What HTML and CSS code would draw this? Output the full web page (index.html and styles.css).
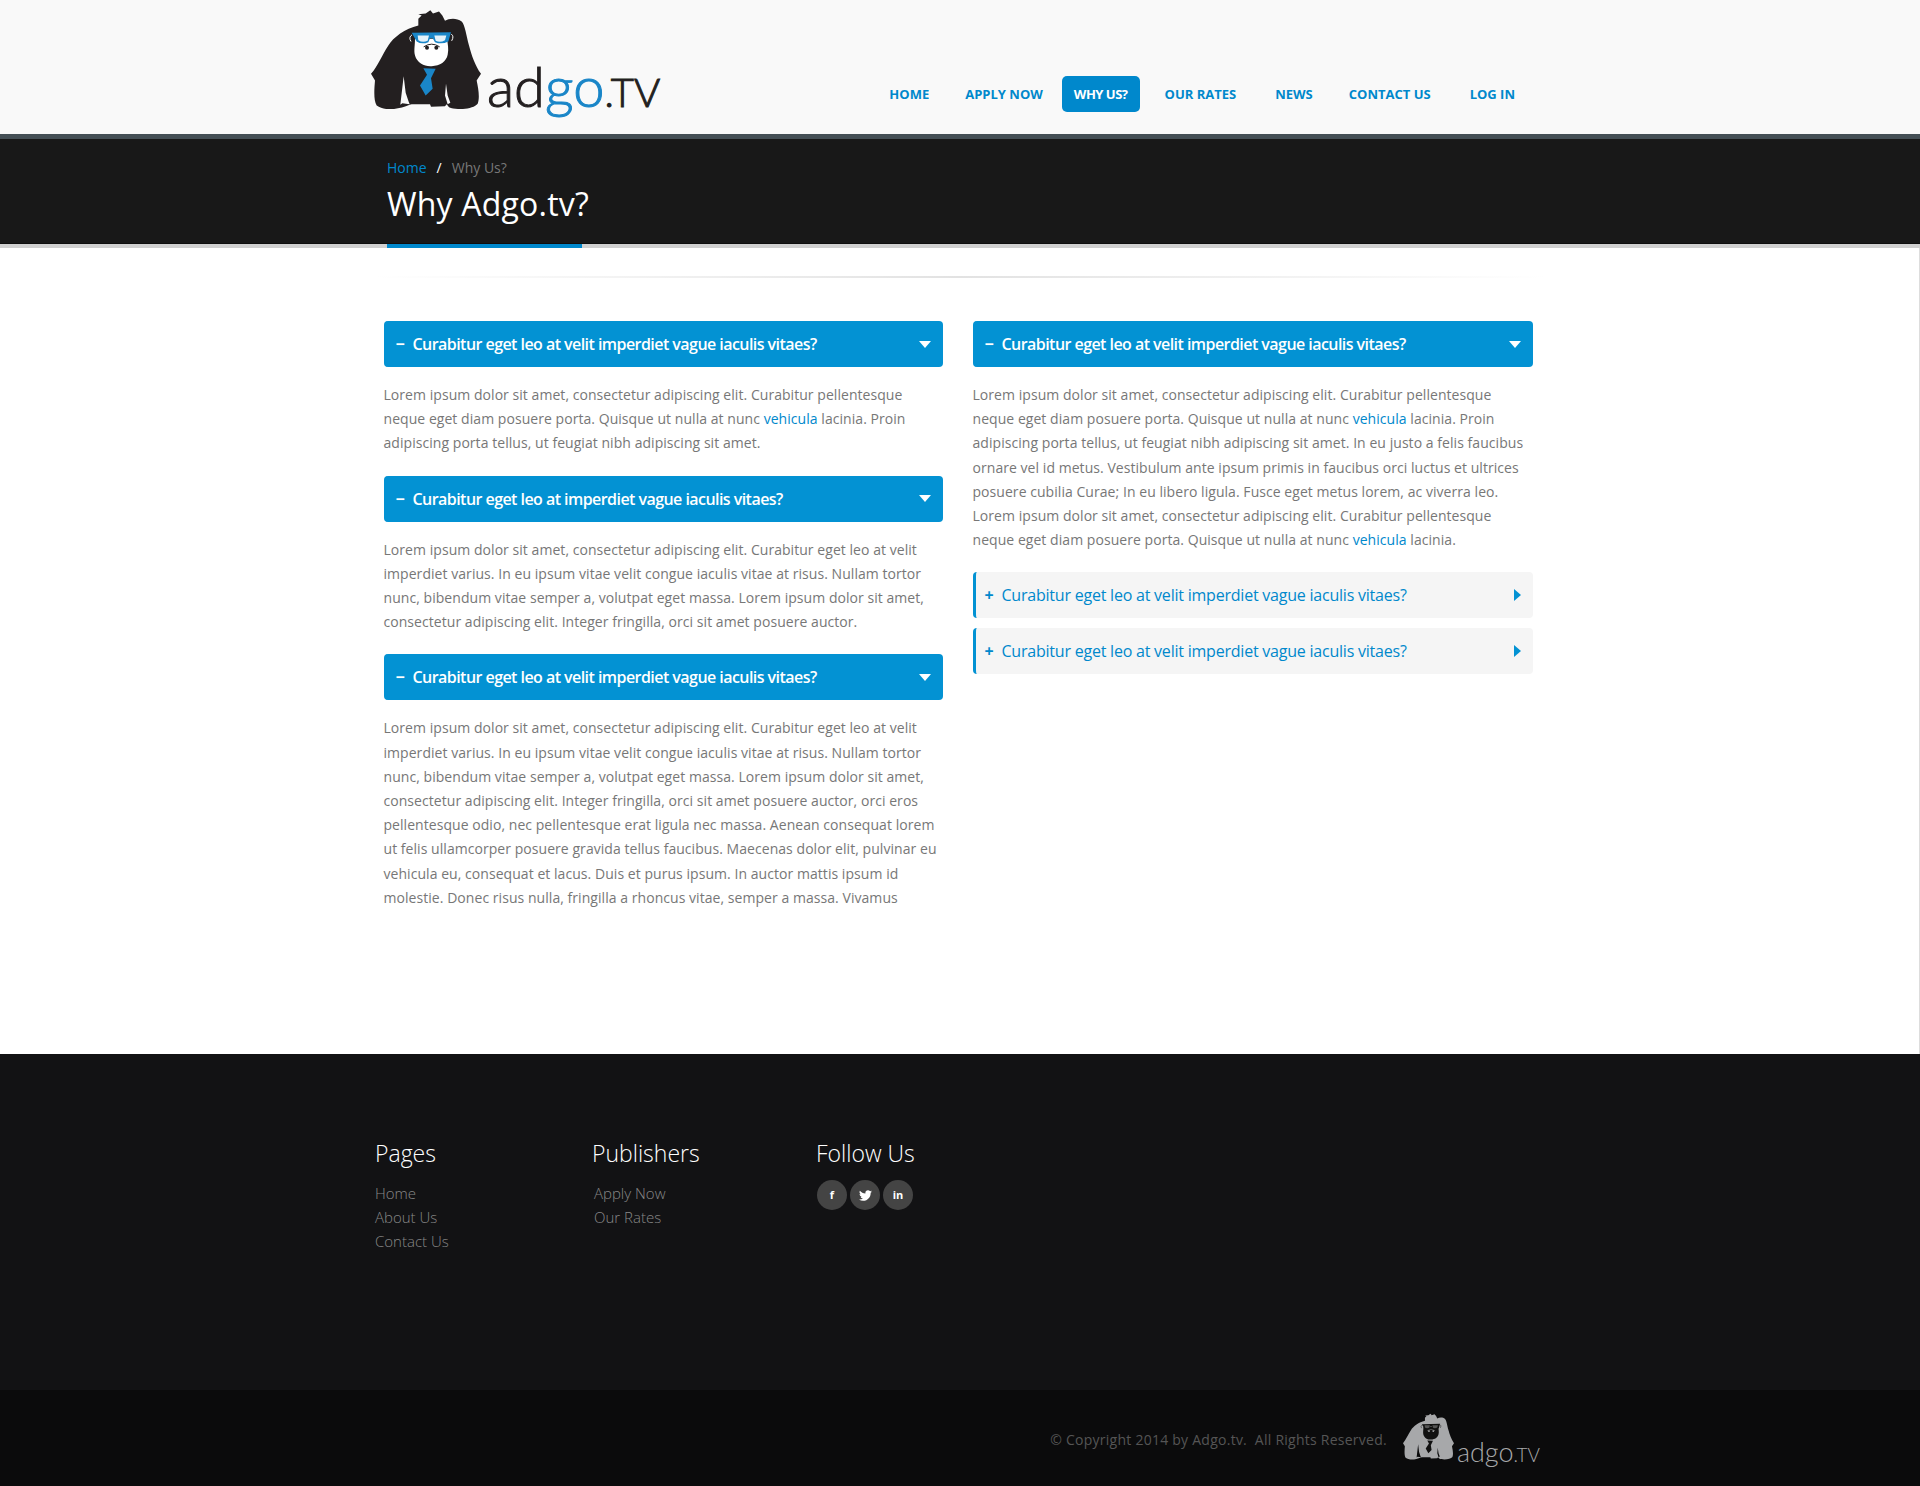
FILE: index.html
```html
<!DOCTYPE html>
<html lang="en">

<head>
    <meta charset="UTF-8">
    <meta name="viewport" content="width=device-width, initial-scale=1.0">
    <title>Why Adgo.tv?</title>
    <link rel="stylesheet" href="styles.css">
</head>

<body>
    <svg class="defs" width="0" height="0">
        <symbol id="gorilla" viewBox="18 14 330 296">
            <path class="g-body" fill-rule="evenodd" d="M160 40 L170 30 L160 26 L182 24 L196 14 L204 24 L222 18 L232 30 L240 46 C252 38 275 36 290 48 C300 58 304 90 312 120 C320 150 330 180 348 205 L335 225 C340 250 345 275 338 295 C325 312 275 315 252 305 L245 296 L240 302 L198 304 L195 296 L140 296 L134 298 C100 312 60 318 35 300 C25 285 28 250 30 225 L18 205 C40 180 50 150 70 120 C85 95 120 70 160 60 Z M116 212 L122 262 L130 286 L134 296 L112 293 L106 298 Z M243 235 L248 270 L256 292 L248 296 L240 270 Z" />
            <path class="g-face" d="M150 100 C150 120 146 135 150 150 C156 172 180 184 200 182 C225 182 244 168 248 148 C252 130 248 115 246 100 Z" />
            <path class="g-arm" d="M141 88 Q130 95 138 108 M259 86 Q268 92 260 106" />
            <path class="g-shade" d="M140 82 L258 80 L250 108 Q230 118 210 110 L203 98 L195 98 L190 110 Q170 118 155 108 Z" />
            <path class="g-lens" d="M158 90 H192 L188 106 Q172 112 160 104 Z M208 90 H244 L240 104 Q226 112 212 106 Z" />
            <path class="g-brow" d="M176 124 Q200 108 224 124" />
            <circle class="g-eye" cx="186" cy="127" r="6" />
            <circle class="g-eye" cx="214" cy="127" r="6" />
            <path class="g-shade" d="M175 188 L212 190 L198 218 L203 250 L182 270 L165 240 L186 208 Z" />
        </symbol>
    </svg>

    <header class="site-header">
        <div class="container header-inner">
            <a href="#" class="logo">
                <svg class="logo-mark"><use href="#gorilla" /></svg>
                <span class="logo-text">ad<span class="logo-go">go</span><span class="logo-tv">.TV</span></span>
            </a>
            <nav class="main-nav">
                <a href="#">Home</a>
                <a href="#">Apply Now</a>
                <a href="#" class="active">Why Us?</a>
                <a href="#">Our Rates</a>
                <a href="#" class="wide">News</a>
                <a href="#">Contact Us</a>
                <a href="#" class="wide">Log In</a>
            </nav>
        </div>
    </header>

    <section class="page-top">
        <div class="container">
            <div class="breadcrumb"><a href="#">Home</a><span class="sep">/</span><span>Why Us?</span></div>
            <h1>Why Adgo.tv?</h1>
        </div>
    </section>
    <div class="page-stripe">
        <div class="container">
            <div class="page-stripe-blue"></div>
        </div>
    </div>

    <main class="content">
        <div class="container">
            <div class="divider"></div>
            <div class="columns">
                <div class="col col-left">
                    <div class="toggle open">
                        <span class="sign">&minus;</span>Curabitur eget leo at velit imperdiet vague iaculis vitaes?
                        <span class="arrow"></span>
                    </div>
                    <p>Lorem ipsum dolor sit amet, consectetur adipiscing elit. Curabitur pellentesque neque eget diam posuere porta. Quisque ut nulla at nunc <a href="#">vehicula</a> lacinia. Proin adipiscing porta tellus, ut feugiat nibh adipiscing sit amet.</p>

                    <div class="toggle open">
                        <span class="sign">&minus;</span>Curabitur eget leo at imperdiet vague iaculis vitaes?
                        <span class="arrow"></span>
                    </div>
                    <p>Lorem ipsum dolor sit amet, consectetur adipiscing elit. Curabitur eget leo at velit imperdiet varius. In eu ipsum vitae velit congue iaculis vitae at risus. Nullam tortor nunc, bibendum vitae semper a, volutpat eget massa. Lorem ipsum dolor sit amet, consectetur adipiscing elit. Integer fringilla, orci sit amet posuere auctor.</p>

                    <div class="toggle open">
                        <span class="sign">&minus;</span>Curabitur eget leo at velit imperdiet vague iaculis vitaes?
                        <span class="arrow"></span>
                    </div>
                    <p>Lorem ipsum dolor sit amet, consectetur adipiscing elit. Curabitur eget leo at velit imperdiet varius. In eu ipsum vitae velit congue iaculis vitae at risus. Nullam tortor nunc, bibendum vitae semper a, volutpat eget massa. Lorem ipsum dolor sit amet, consectetur adipiscing elit. Integer fringilla, orci sit amet posuere auctor, orci eros pellentesque odio, nec pellentesque erat ligula nec massa. Aenean consequat lorem ut felis ullamcorper posuere gravida tellus faucibus. Maecenas dolor elit, pulvinar eu vehicula eu, consequat et lacus. Duis et purus ipsum. In auctor mattis ipsum id molestie. Donec risus nulla, fringilla a rhoncus vitae, semper a massa. Vivamus</p>
                </div>

                <div class="col">
                    <div class="toggle open">
                        <span class="sign">&minus;</span>Curabitur eget leo at velit imperdiet vague iaculis vitaes?
                        <span class="arrow"></span>
                    </div>
                    <p>Lorem ipsum dolor sit amet, consectetur adipiscing elit. Curabitur pellentesque neque eget diam posuere porta. Quisque ut nulla at nunc <a href="#">vehicula</a> lacinia. Proin adipiscing porta tellus, ut feugiat nibh adipiscing sit amet. In eu justo a felis faucibus ornare vel id metus. Vestibulum ante ipsum primis in faucibus orci luctus et ultrices posuere cubilia Curae; In eu libero ligula. Fusce eget metus lorem, ac viverra leo. Lorem ipsum dolor sit amet, consectetur adipiscing elit. Curabitur pellentesque neque eget diam posuere porta. Quisque ut nulla at nunc <a href="#">vehicula</a> lacinia.</p>

                    <div class="toggle">
                        <span class="sign">+</span>Curabitur eget leo at velit imperdiet vague iaculis vitaes?
                        <span class="arrow"></span>
                    </div>
                    <div class="toggle">
                        <span class="sign">+</span>Curabitur eget leo at velit imperdiet vague iaculis vitaes?
                        <span class="arrow"></span>
                    </div>
                </div>
            </div>
        </div>
    </main>

    <footer class="site-footer">
        <div class="container footer-cols">
            <div class="footer-col pages">
                <h4>Pages</h4>
                <a href="#">Home</a>
                <a href="#">About Us</a>
                <a href="#">Contact Us</a>
            </div>
            <div class="footer-col publishers">
                <h4>Publishers</h4>
                <a href="#">Apply Now</a>
                <a href="#">Our Rates</a>
            </div>
            <div class="footer-col">
                <h4>Follow Us</h4>
                <div class="social">
                    <a href="#">f</a>
                    <a href="#">
                        <svg viewBox="0 0 24 24" width="13" height="13">
                            <path fill="#fff" d="M23.953 4.57a10 10 0 01-2.825.775 4.958 4.958 0 002.163-2.723c-.951.555-2.005.959-3.127 1.184a4.92 4.92 0 00-8.384 4.482C7.69 8.095 4.067 6.13 1.64 3.162a4.822 4.822 0 00-.666 2.475c0 1.71.87 3.213 2.188 4.096a4.904 4.904 0 01-2.228-.616v.06a4.923 4.923 0 003.946 4.827 4.996 4.996 0 01-2.212.085 4.936 4.936 0 004.604 3.417 9.867 9.867 0 01-6.102 2.105c-.39 0-.779-.023-1.17-.067a13.995 13.995 0 007.557 2.209c9.053 0 13.998-7.496 13.998-13.985 0-.21 0-.42-.015-.63A9.935 9.935 0 0024 4.59z" />
                        </svg>
                    </a>
                    <a href="#">in</a>
                </div>
            </div>
        </div>
        <div class="footer-bottom">
            <div class="container footer-bottom-inner">
                <span class="copyright">&copy; Copyright 2014 by Adgo.tv.&nbsp; All Rights Reserved.</span>
                <div class="footer-logo">
                    <svg class="footer-mark"><use href="#gorilla" /></svg>
                    <span class="footer-logo-text">adgo<span class="footer-tv">.TV</span></span>
                </div>
            </div>
        </div>
    </footer>
</body>

</html>
```

FILE: styles.css
```css
/* Base */
body {
    margin: 0;
    background-color: #fff;
    font-family: "Open Sans", "Liberation Sans", sans-serif;
    font-size: 14px;
    line-height: 24px;
    color: #777;
}

a {
    color: #0088cc;
    text-decoration: none;
}

.defs {
    position: absolute;
}

.container {
    width: 1170px;
    margin: 0 auto;
}

/* Gorilla logo colours */
.g-body {
    fill: var(--g-body, #231f20);
}

.g-face {
    fill: var(--g-face, #fff);
}

.g-shade {
    fill: var(--g-shade, #1a86c8);
}

.g-lens {
    fill: var(--g-lens, #e4f2fa);
}

.g-eye {
    fill: var(--g-eye, #231f20);
}

.g-brow {
    fill: none;
    stroke: var(--g-eye, #231f20);
    stroke-width: 3;
}

.g-arm {
    fill: none;
    stroke: var(--g-arm, #fff);
    stroke-width: 3;
}

/* Header */
.site-header {
    height: 134px;
    background-color: #f9f9f9;
    border-bottom: 5px solid #444f55;
}

.header-inner {
    display: flex;
    justify-content: space-between;
    height: 100%;
}

.logo {
    display: flex;
    margin-left: -4px;
    padding-top: 10px;
}

.logo-mark {
    width: 110px;
    height: 99px;
}

.logo-text {
    margin: 41px 0 0 6px;
    font-family: Lato, "Open Sans", sans-serif;
    font-weight: 300;
    font-size: 56px;
    line-height: 70px;
    color: #231f20;
    -webkit-text-stroke: 1px currentColor;
}

.logo-go {
    color: #1a86c8;
}

.logo-tv {
    font-size: 40px;
    color: #231f20;
}

.main-nav {
    display: flex;
    align-items: flex-start;
    gap: 12px;
    padding: 76px 18px 0 0;
}

.main-nav a {
    padding: 0 12px;
    height: 36px;
    line-height: 36px;
    font-size: 13px;
    font-weight: 700;
    text-transform: uppercase;
    color: #0088cc;
    border-radius: 5px;
}

.main-nav a.wide {
    margin-left: 3px;
}

.main-nav a.active {
    margin: 0 1px 0 -5px;
    background-color: #0088cc;
    color: #fff;
    letter-spacing: -0.5px;
}

/* Page title bar */
.page-top {
    height: 104px;
    background-color: #181818;
    border-bottom: 1px solid #0e0e0e;
    color: #fff;
}

.page-top .container {
    padding: 17px 0 0 12px;
    box-sizing: border-box;
}

.breadcrumb {
    color: #777;
}

.breadcrumb .sep {
    margin: 0 10px;
    color: #fff;
}

h1 {
    margin: 1px 0 0;
    font-size: 32px;
    line-height: 46px;
    font-weight: 400;
    letter-spacing: 0.2px;
}

.page-stripe {
    height: 4px;
    background-color: #d0d0d0;
}

.page-stripe-blue {
    width: 195px;
    height: 4px;
    margin-left: 12px;
    background-color: #0088cc;
}

/* Main content */
.content {
    height: 806px;
    padding-top: 28px;
    border-right: 1px solid #ddd;
    box-sizing: border-box;
}

.divider {
    height: 2px;
    background: linear-gradient(to right, transparent, #e2e2e2 50%, transparent);
}

.columns {
    display: flex;
    gap: 30px;
    margin: 43px 12px 0 9px;
}

.col {
    width: 560px;
}

.col-left {
    width: 559px;
}

.col p {
    margin: 16px 0 20px;
    line-height: 24.2px;
    letter-spacing: 0.05px;
}

.toggle {
    display: flex;
    align-items: center;
    height: 46px;
    margin-bottom: 10px;
    padding: 0 12px 0 9px;
    box-sizing: border-box;
    background-color: #f5f5f5;
    border-left: 3px solid #0392d3;
    border-radius: 4px;
    font-size: 16px;
    letter-spacing: -0.22px;
    color: #0088cc;
}

.toggle.open {
    margin-bottom: 0;
    background-color: #0392d3;
    color: #fff;
    font-weight: 600;
    letter-spacing: -0.55px;
}

.sign {
    width: 17px;
    font-weight: 700;
}

.arrow {
    width: 0;
    height: 0;
    margin-left: auto;
    border-style: solid;
    border-width: 6px 0 6px 7px;
    border-color: transparent transparent transparent #0392d3;
}

.toggle.open .arrow {
    border-width: 7px 6px 0;
    border-color: #fff transparent transparent;
}

/* Footer */
.site-footer {
    background-color: #121214;
}

.footer-cols {
    display: flex;
    height: 336px;
    padding-top: 80px;
    box-sizing: border-box;
}

.footer-col {
    display: flex;
    flex-direction: column;
    align-items: flex-start;
}

.pages {
    width: 217px;
}

.publishers {
    width: 224px;
}

.publishers a {
    margin-left: 2px;
}

.footer-col h4 {
    margin: 0 0 9px;
    font-size: 23px;
    line-height: 38px;
    font-weight: 300;
    color: #fff;
}

.footer-col a {
    font-size: 15px;
    font-weight: 300;
    color: #888;
}

.social {
    display: flex;
    gap: 3px;
    margin: -1px 0 0 1px;
}

.footer-col .social a {
    display: flex;
    align-items: center;
    justify-content: center;
    width: 30px;
    height: 30px;
    border-radius: 50%;
    background-color: #444;
    color: #fff;
    font-size: 11px;
    font-weight: 700;
}

.footer-bottom {
    height: 96px;
    background-color: #0b0b0c;
}

.footer-bottom-inner {
    display: flex;
    justify-content: flex-end;
    padding-right: 5px;
    box-sizing: border-box;
}

.copyright {
    margin-top: 38px;
    font-size: 14px;
    color: #555;
    letter-spacing: 0.25px;
}

.footer-logo {
    display: flex;
    margin-left: 16px;
    padding-top: 23px;
    --g-body: #a7a8aa;
    --g-face: #111;
    --g-shade: #111;
    --g-lens: #555;
    --g-eye: #a7a8aa;
    --g-arm: #111;
}

.footer-mark {
    width: 51px;
    height: 47px;
}

.footer-logo-text {
    margin: 24px 0 0 3px;
    font-family: Lato, "Open Sans", sans-serif;
    font-weight: 300;
    font-size: 27px;
    line-height: 30px;
    color: #a7a8aa;
}

.footer-tv {
    font-size: 19px;
}
```
